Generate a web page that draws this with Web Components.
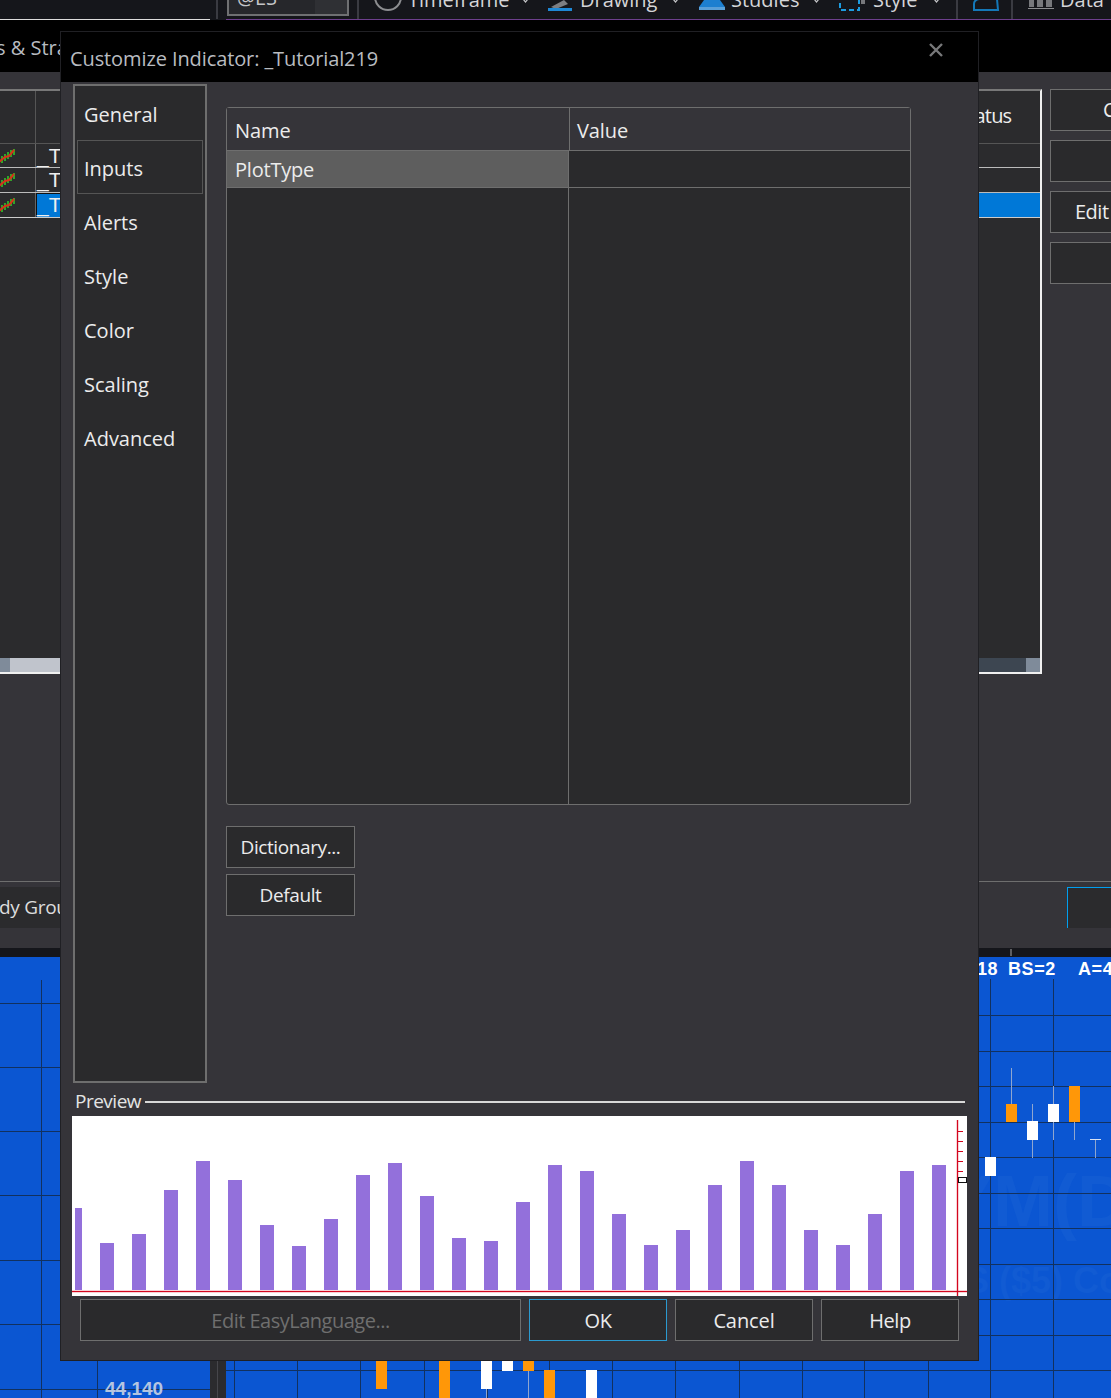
<!DOCTYPE html>
<html>
<head>
<meta charset="utf-8">
<title>Customize Indicator</title>
<style>
  html, body { margin: 0; height: 100%; background: #353439; overflow: hidden; }
  body { font-family: "Open Sans", "Liberation Sans", sans-serif; color: #e4e4e4; position: relative; width: 1111px; height: 1398px; }
</style>
</head>
<body>
<ts-toolbar></ts-toolbar>
<ts-tabband>s &amp; Stra</ts-tabband>
<ts-studies></ts-studies>
<ts-groupbar>dy Grou</ts-groupbar>
<ts-chart></ts-chart>

<ts-dialog heading="Customize Indicator: _Tutorial219">
  <ts-nav slot="nav" active="Inputs"></ts-nav>
  <ts-inputs slot="content"></ts-inputs>
  <ts-preview slot="preview"></ts-preview>
  <ts-btn slot="actions" style="width:441px" disabled>Edit EasyLanguage...</ts-btn>
  <ts-btn slot="actions" style="width:138px" focused>OK</ts-btn>
  <ts-btn slot="actions" style="width:138px;letter-spacing:-0.1px">Cancel</ts-btn>
  <ts-btn slot="actions" style="width:138px">Help</ts-btn>
</ts-dialog>

<script>
class TsBtn extends HTMLElement {
  constructor() {
    super();
    this.attachShadow({ mode: "open" });
    this.shadowRoot.innerHTML = `
      <style>
        :host {
          display: flex; align-items: center; justify-content: center;
          box-sizing: border-box; height: 42px; flex: none;
          background: #2a2a2c; border: 1px solid #6e6e6e;
          font-size: 20px; letter-spacing: -0.5px; color: #ececec; white-space: nowrap;
        }
        :host([disabled]) { color: #6f6f6f; }
        :host([focused]) { border-color: #2b9ad0; }
      </style>
      <slot></slot>`;
  }
}
customElements.define("ts-btn", TsBtn);

class TsToolbar extends HTMLElement {
  constructor() {
    super();
    this.attachShadow({ mode: "open" });
    const chev = (mr) => `<svg width="7" height="4" viewBox="0 0 7 4" style="margin:0 ${mr}px 12px auto"><path d="M1 0 L3.5 3 L6 0" fill="none" stroke="#c4c5c8" stroke-width="1.2"/></svg>`;
    this.shadowRoot.innerHTML = `
      <style>
        :host { display: block; height: 20px; overflow: hidden; background: #15161b; }
        .row { display: flex; align-items: flex-end; height: 19px; padding-left: 216px; overflow: hidden; color: #d4d5d8; font-size: 20px; }
        .sep { flex: none; width: 2px; height: 19px; background: #3a3b42; }
        .sym { flex: none; box-sizing: border-box; width: 122px; height: 36px; margin: 0 8px 3px 9px; padding: 0 0 0 8px; border: 2px solid #6f7072; background: linear-gradient(90deg, #26272b 73%, #2f3034 73%); line-height: 32px; color: #c4c5c8; }
        .item { flex: none; display: flex; align-items: flex-end; height: 30px; line-height: 30px; margin-bottom: 4px; white-space: nowrap; }
        svg { flex: none; display: block; overflow: visible; }
        .rule { display: flex; height: 1px; }
        .rule i { display: block; }
        .w { width: 210px; background: #dcdcdc; }
        .g { width: 16px; }
        .p { flex: 1; background: #6d3f8d; }
      </style>
      <div class="row">
        <div class="sep"></div>
        <div class="sym">@ES</div>
        <div class="sep"></div>
        <svg width="28" height="19" viewBox="0 0 28 19" style="margin:0 6px 0 15px"><circle cx="14" cy="-3" r="13" fill="none" stroke="#8c8d90" stroke-width="2"/></svg>
        <div class="item" style="width:140px">Timeframe${chev(19)}</div>
        <svg width="24" height="19" viewBox="0 0 24 19" style="margin-right:8px"><path d="M3 7 L16 0 L20 4 L8 9 Z" fill="#7d7e82"/><rect x="0" y="8" width="24" height="3" fill="#1e88d6"/></svg>
        <div class="item" style="width:119px">Drawing${chev(20)}</div>
        <svg width="26" height="19" viewBox="0 0 26 19" style="margin-right:6px"><path d="M5 0 H21 L26 7 V10 H0 V7 Z" fill="#1d7fd0"/><rect y="7" width="26" height="3" fill="#5a9fd8"/></svg>
        <div class="item" style="width:108px">Studies${chev(19)}</div>
        <svg width="26" height="19" viewBox="0 0 26 19" style="margin-right:8px"><rect x="1" y="-6" width="19" height="16" fill="none" stroke="#1d9ce0" stroke-width="2" stroke-dasharray="5 3"/><rect x="22" y="0" width="4" height="4" fill="#77787c"/></svg>
        <div class="item" style="width:83px">Style${chev(16)}</div>
        <div class="sep"></div>
        <svg width="26" height="19" viewBox="0 0 26 19" style="margin:0 12px 0 15px"><path d="M1 10 V4 Q1 0 6 -1 H24 L25 10 Z" fill="none" stroke="#1478b8" stroke-width="2"/></svg>
        <div class="sep"></div>
        <svg width="26" height="19" viewBox="0 0 26 19" style="margin:0 6px 0 15px"><path d="M1 0 h5 v7 h-5z M9 0 h6 v7 h-6z M18 0 h6 v7 h-6z" fill="#77787c"/><rect y="8" width="26" height="1" fill="#8c8d90"/></svg>
        <div class="item">Data</div>
      </div>
      <div class="rule"><i class="w"></i><i class="g"></i><i class="p"></i></div>`;
  }
}
customElements.define("ts-toolbar", TsToolbar);

class TsTabband extends HTMLElement {
  constructor() {
    super();
    this.attachShadow({ mode: "open" });
    this.shadowRoot.innerHTML = `
      <style>
        :host { display: block; height: 52px; overflow: hidden; background: #000; color: #b7bbc0; font-size: 20px; }
        div { margin: 14px 0 0 -4px; line-height: 28px; white-space: nowrap; }
      </style>
      <div><slot></slot></div>`;
  }
}
customElements.define("ts-tabband", TsTabband);

class TsStudies extends HTMLElement {
  constructor() {
    super();
    this.attachShadow({ mode: "open" });
    const row = (h, cls, name, line) => `
      <div class="row ${cls}" style="height:${h}px;border-bottom:1px solid ${line}">
        <div class="ico">${cls === "head" ? "" : this.spark()}</div>
        <div class="name">${name}</div>
        <div class="status">${cls === "head" ? "Status" : ""}</div>
      </div>`;
    this.shadowRoot.innerHTML = `
      <style>
        :host { display: block; height: 809px; box-sizing: border-box; padding-top: 17px; overflow: hidden; }
        .wrap { display: flex; gap: 8px; }
        .table { flex: none; box-sizing: border-box; width: 1042px; height: 585px; display: flex; flex-direction: column;
          background: #2b2b2d; border-top: 2px solid #787878; border-right: 2px solid #f0f0f0; border-bottom: 2px solid #f0f0f0; }
        .row { display: flex; flex: none; font-size: 20px; color: #eee; }
        .ico { flex: none; width: 36px; box-sizing: border-box; border-right: 1px solid #666; overflow: hidden; display: flex; align-items: center; }
        .ico svg { margin-left: -1px; }
        .name { flex: 1; padding-left: 1px; white-space: nowrap; overflow: hidden; font-family: "Liberation Sans", sans-serif; font-size: 21px; line-height: 23px; }
        .status { flex: none; width: 82px; overflow: hidden; }
        .head .ico { border-right-color: #555; }
        .head .status { padding-top: 12px; line-height: 26px; letter-spacing: -0.8px; }
        .sel .name, .sel .status { background: #0078d7; }
        .sel .name { box-shadow: inset 1px 1px 0 #111; }
        .fill { flex: 1; }
        .scroll { flex: none; display: flex; height: 14px; }
        .scroll i { display: block; }
        .scroll .a { width: 10px; background: #7f8b9a; }
        .scroll .b { width: 500px; background: #c0c4cc; }
        .scroll .c { flex: 1; background: #3d4651; }
        .scroll .d { width: 14px; background: #7f8b9a; }
        .btns { flex: none; display: flex; flex-direction: column; gap: 9px; }
        ts-btn { width: 112px; justify-content: flex-start; border-right: 0; padding-bottom: 2px; }
      </style>
      <div class="wrap">
        <div class="table">
          ${row(52, "head", "", "#555")}
          ${row(23, "", "_T", "#bbb")}
          ${row(24, "", "_T", "#bbb")}
          ${row(24, "sel", "_T", "#ccc")}
          <div class="fill"></div>
          <div class="scroll"><i class="a"></i><i class="b"></i><i class="c"></i><i class="d"></i></div>
        </div>
        <div class="btns">
          <ts-btn style="padding-left:52px">C</ts-btn>
          <ts-btn></ts-btn>
          <ts-btn style="padding-left:24px">Edit</ts-btn>
          <ts-btn></ts-btn>
        </div>
      </div>`;
  }
  spark() {
    return `<svg width="16" height="16" viewBox="0 0 16 16"><path d="M3 8 V15 M6 6 V13 M9 4 V11 M12 2 V9 M15 1 V7" stroke="#2db52a" stroke-width="1.8" fill="none"/><path d="M0 14 L6 9 L10 8 L15 2" stroke="#d8331a" stroke-width="2" fill="none"/></svg>`;
  }
}
customElements.define("ts-studies", TsStudies);

class TsGroupbar extends HTMLElement {
  constructor() {
    super();
    this.attachShadow({ mode: "open" });
    this.shadowRoot.innerHTML = `
      <style>
        :host { display: block; height: 67px; box-sizing: border-box; border-top: 1px solid #6e6e6e; overflow: hidden; }
        .row { display: flex; justify-content: space-between; margin-top: 5px; height: 41px; }
        .tab { background: #2b2b2d; width: 500px; line-height: 41px; font-size: 19px; letter-spacing: -0.3px; color: #ddd; white-space: nowrap; overflow: hidden; }
        .tab span { margin-left: -1px; display: block; }
        .apply { width: 44px; box-sizing: border-box; background: #2b2b2d; border-top: 1px solid #009fef; border-left: 1px solid #009fef; }
      </style>
      <div class="row">
        <div class="tab"><span><slot></slot></span></div>
        <div class="apply"></div>
      </div>`;
  }
}
customElements.define("ts-groupbar", TsGroupbar);

class TsChart extends HTMLElement {
  constructor() {
    super();
    this.attachShadow({ mode: "open" });
    const line = "#12315f";
    const hl = (x1, x2, y) => `<line x1="${x1}" x2="${x2}" y1="${y + .5}" y2="${y + .5}" stroke="${line}"/>`;
    const vl = (x, y1) => `<line x1="${x + .5}" x2="${x + .5}" y1="${y1}" y2="1398" stroke="${line}"/>`;
    const candle = (x, y1, y2, color, w1, w2) => (w1 !== undefined ? `<line x1="${x + 5.5}" x2="${x + 5.5}" y1="${w1}" y2="${w2}" stroke="#8fa6cf"/>` : "") +
      `<rect x="${x}" y="${y1}" width="11" height="${y2 - y1}" fill="${color}"/>`;

    const leftGrid = [1003, 1067, 1131, 1195, 1260, 1324, 1389].map(y => hl(0, 210, y)).join("") + vl(41, 980) + vl(97, 980);
    let rightGrid = "";
    for (let i = 0; i < 11; i++) rightGrid += hl(226, 1111, Math.round(1015 + i * 35.5));
    [234, 297, 360, 424, 487, 549, 612, 675, 739, 802, 864, 928, 990, 1053].forEach(x => { rightGrid += vl(x, 979); });

    const or = "#ff9708", wh = "#fff";
    const candles = [
      candle(376, 1361, 1389, or),
      candle(439, 1361, 1398, or),
      candle(481, 1361, 1389, wh, 1361, 1398),
      candle(502, 1361, 1371, wh),
      candle(523, 1361, 1371, or, 1361, 1398),
      candle(544, 1370, 1398, or),
      candle(586, 1370, 1398, wh),
      candle(985, 1157, 1176, wh),
      candle(1006, 1104, 1122, or, 1068, 1122),
      candle(1027, 1121, 1140, wh, 1104, 1158),
      candle(1048, 1104, 1122, wh, 1086, 1140),
      candle(1069, 1086, 1122, or, 1086, 1140),
      `<line x1="1095.5" x2="1095.5" y1="1139" y2="1158" stroke="#8fa6cf"/><line x1="1090" x2="1101" y1="1139.5" y2="1139.5" stroke="#d9e2f3"/>`
    ].join("");

    this.shadowRoot.innerHTML = `
      <style>
        :host { display: block; height: 450px; overflow: hidden; }
        .strip { height: 9px; background: #15161b; position: relative; }
        .strip i { position: absolute; left: 1010px; top: 1px; width: 2px; height: 7px; background: #5d5e62; }
        .panes { display: flex; height: 441px; }
        .pane { position: relative; background: #0b56d2; overflow: hidden; }
        .left { width: 210px; flex: none; }
        .gap { width: 16px; flex: none; background: linear-gradient(90deg, #2b2b2e 7px, #46464b 7px, #46464b 8px, #2b2b2e 8px); }
        .right { flex: 1; }
        svg { position: absolute; left: 0; top: 0; display: block; }
        span { position: absolute; font-family: "Liberation Sans", Arial, sans-serif; font-weight: 700; white-space: nowrap; }
        .info { top: 2px; font-size: 18px; line-height: 21px; color: #fff; letter-spacing: 0.6px; }
        .price { left: 105px; top: 421px; font-size: 19px; line-height: 22px; color: #b5c5e0; }
        .mark1 { left: 719px; top: 204px; font-size: 72px; line-height: 80px; color: #115bd3; }
        .mark2 { left: 739px; top: 304px; font-size: 36px; line-height: 40px; color: #115bd3; }
      </style>
      <div class="strip"><i></i></div>
      <div class="panes">
        <div class="pane left">
          <svg width="210" height="441" viewBox="0 957 210 441">${leftGrid}${hl(97, 105, 1389)}</svg>
          <span class="price">44,140</span>
        </div>
        <div class="gap"></div>
        <div class="pane right">
          <span class="mark1">YM(D</span>
          <span class="mark2">S ($5) Co</span>
          <svg width="885" height="441" viewBox="226 957 885 441">${rightGrid}${candles}</svg>
          <span class="info" style="left:751px">18</span>
          <span class="info" style="left:782px">BS=2</span>
          <span class="info" style="left:852px">A=4</span>
        </div>
      </div>`;
  }
}
customElements.define("ts-chart", TsChart);

class TsDialog extends HTMLElement {
  constructor() {
    super();
    this.attachShadow({ mode: "open" });
    this.shadowRoot.innerHTML = `
      <style>
        :host {
          position: absolute; left: 60px; top: 31px; width: 919px; height: 1330px; box-sizing: border-box;
          display: flex; flex-direction: column;
          background: #353439; border: 1px solid #202024;
        }
        .title { flex: none; height: 50px; display: flex; justify-content: space-between; background: #000; color: #b9bcc0; font-size: 20px; letter-spacing: -0.1px; }
        .title b { font-weight: 400; padding: 13px 0 0 9px; line-height: 28px; white-space: nowrap; }
        .close { margin: 10px 34px 0 0; width: 16px; height: 16px; }
        .main { flex: 1; display: flex; min-height: 0; margin: 2px 0 8px 12px; gap: 19px; }
        .label { flex: none; display: flex; align-items: center; gap: 4px; margin: 0 13px 5px 14px; height: 20px; font-size: 19px; letter-spacing: -0.5px; color: #e4e4e4; }
        .label i { flex: 1; height: 2px; margin-top: 2px; background: #d8d8d8; }
        .actions { flex: none; display: flex; gap: 8px; margin: 3px 0 19px 19px; }
      </style>
      <div class="title">
        <b>${this.getAttribute("heading")}</b>
        <svg class="close" viewBox="0 0 16 16"><path d="M2 2 L14 14 M14 2 L2 14" stroke="#77787a" stroke-width="2.4"/></svg>
      </div>
      <div class="main"><slot name="nav"></slot><slot name="content"></slot></div>
      <div class="label">Preview<i></i></div>
      <slot name="preview"></slot>
      <div class="actions"><slot name="actions"></slot></div>`;
  }
}
customElements.define("ts-dialog", TsDialog);

class TsNav extends HTMLElement {
  constructor() {
    super();
    this.attachShadow({ mode: "open" });
    const active = this.getAttribute("active");
    const items = ["General", "Inputs", "Alerts", "Style", "Color", "Scaling", "Advanced"];
    this.shadowRoot.innerHTML = `
      <style>
        :host { display: block; flex: none; box-sizing: border-box; width: 134px; height: 100%; background: #2a2a2c; border: 2px solid #6e6e6e; padding: 0 2px; }
        div { box-sizing: border-box; height: 54px; padding: 2px 0 0 6px; display: flex; align-items: center; border: 1px solid transparent; font-size: 20px; color: #ececec; }
        div.on { border-color: #555; }
      </style>
      ${items.map(t => `<div class="${t === active ? "on" : ""}">${t}</div>`).join("")}`;
  }
}
customElements.define("ts-nav", TsNav);

class TsInputs extends HTMLElement {
  constructor() {
    super();
    this.attachShadow({ mode: "open" });
    this.shadowRoot.innerHTML = `
      <style>
        :host { display: block; flex: none; width: 685px; padding-top: 23px; }
        .grid { box-sizing: border-box; height: 698px; border: 1px solid #6e6e6e; border-radius: 3px; display: grid; grid-template-columns: 343px 1fr; grid-template-rows: 43px 37px 1fr; background: #2a2a2c; font-size: 20px; letter-spacing: -0.1px; color: #ececec; }
        .h, .c { box-sizing: border-box; display: flex; align-items: center; padding-left: 8px; border-bottom: 1px solid #6e6e6e; }
        .h { background: #353439; border-right: 1px solid #6e6e6e; padding-top: 2px; }
        .h + .h { border-right: 0; padding-left: 7px; }
        .c { border-right: 1px solid #6e6e6e; margin-right: 1px; padding-top: 1px; }
        .c.cur { background: #5e5e5e; letter-spacing: -0.2px; }
        .c.val { border-right: 0; margin-left: -1px; margin-right: 0; }
        .b { border-right: 1px solid #6e6e6e; margin-right: 1px; }
        .btns { display: flex; flex-direction: column; gap: 6px; margin-top: 21px; }
        ts-btn { width: 129px; font-size: 19px; letter-spacing: -0.4px; }
      </style>
      <div class="grid">
        <div class="h">Name</div><div class="h">Value</div>
        <div class="c cur">PlotType</div><div class="c val"></div>
        <div class="b"></div><div></div>
      </div>
      <div class="btns"><ts-btn>Dictionary...</ts-btn><ts-btn>Default</ts-btn></div>`;
  }
}
customElements.define("ts-inputs", TsInputs);

class TsPreview extends HTMLElement {
  constructor() {
    super();
    this.attachShadow({ mode: "open" });
    const tops = [1243, 1234, 1190, 1161, 1180, 1225, 1246, 1219, 1175, 1163, 1196, 1238, 1241, 1202, 1165, 1171, 1214, 1245, 1230, 1185, 1161, 1185, 1230, 1245, 1214, 1171, 1165];
    const bar = (x, w, top) => `<rect x="${x}" y="${top - 1116}" width="${w}" height="${1290 - top}" fill="#9370db"/>`;
    const bars = bar(3, 7, 1208) + tops.map((t, i) => bar(28 + i * 32, 14, t)).join("");
    const red = "#d4061e";
    const ticks = [15.5, 25.5, 35.5, 45.5, 55.5].map(y => `<line x1="885" x2="891" y1="${y}" y2="${y}" stroke="${red}"/>`).join("");
    this.shadowRoot.innerHTML = `
      <style>
        :host { display: block; flex: none; width: 895px; height: 180px; margin-left: 11px; background: #fff; }
        svg { display: block; }
      </style>
      <svg width="895" height="180" viewBox="0 0 895 180">
        ${bars}
        <line x1="0" x2="895" y1="175.5" y2="175.5" stroke="${red}" stroke-opacity="0.18" stroke-width="3"/>
        <line x1="885.5" x2="885.5" y1="4" y2="180" stroke="${red}" stroke-opacity="0.18" stroke-width="3"/>
        <line x1="0" x2="895" y1="175.5" y2="175.5" stroke="${red}"/>
        <line x1="885.5" x2="885.5" y1="4" y2="180" stroke="${red}"/>
        ${ticks}
        <rect x="886.5" y="61.5" width="8" height="5" fill="#fff" stroke="#111"/>
      </svg>`;
  }
}
customElements.define("ts-preview", TsPreview);
</script>
</body>
</html>
